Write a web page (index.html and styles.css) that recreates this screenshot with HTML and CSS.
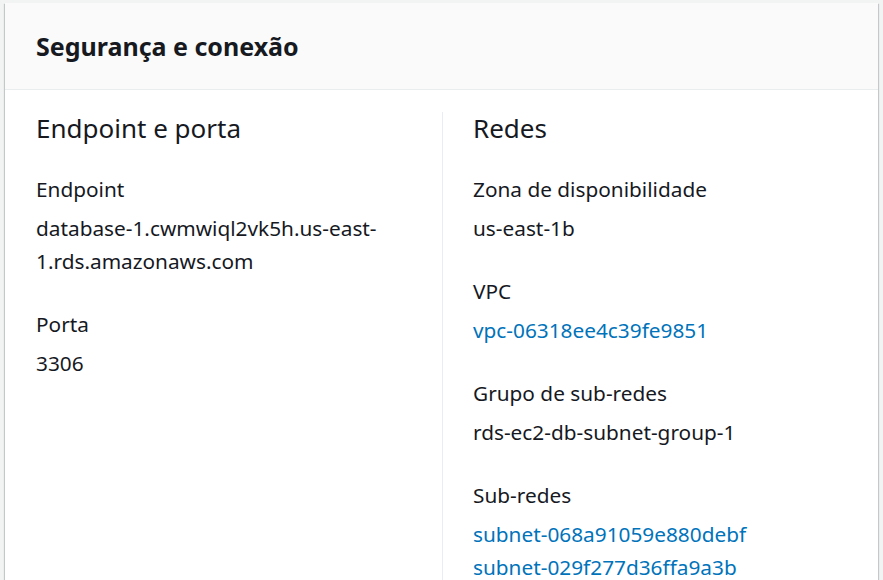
FILE: index.html
```html
<!DOCTYPE html>
<html lang="pt">
<head>
<meta charset="utf-8">
<link rel="stylesheet" href="styles.css">
</head>
<body>
<div class="panel">
  <div class="panel-header">
    <h2 class="panel-title">Segurança e conexão</h2>
  </div>
  <div class="panel-body">
    <div class="col">
      <h3 class="col-title">Endpoint e porta</h3>
      <div class="field">
        <div class="label">Endpoint</div>
        <div class="value">database-1.cwmwiql2vk5h.us-east-<br>1.rds.amazonaws.com</div>
      </div>
      <div class="field">
        <div class="label">Porta</div>
        <div class="value">3306</div>
      </div>
    </div>
    <div class="col col-right">
      <h3 class="col-title">Redes</h3>
      <div class="field">
        <div class="label">Zona de disponibilidade</div>
        <div class="value">us-east-1b</div>
      </div>
      <div class="field">
        <div class="label">VPC</div>
        <div class="value"><a class="link" href="#">vpc-06318ee4c39fe9851</a></div>
      </div>
      <div class="field">
        <div class="label">Grupo de sub-redes</div>
        <div class="value">rds-ec2-db-subnet-group-1</div>
      </div>
      <div class="field">
        <div class="label">Sub-redes</div>
        <div class="value"><a class="link" href="#">subnet-068a91059e880debf</a><br><a class="link" href="#">subnet-029f277d36ffa9a3b</a></div>
      </div>
    </div>
  </div>
</div>
</body>
</html>
```
FILE: styles.css
```css
html, body {
  margin: 0;
  padding: 0;
  background: #f2f3f3;
  font-family: "Noto Sans", "Open Sans", sans-serif;
  color: #16191f;
  overflow: hidden;
  height: 580px;
}
.panel {
  margin: 3px 5px 0 5px;
  background: #fff;
  box-shadow: 0 1px 1px 0 rgba(0, 28, 36, 0.3), 1px 1px 1px 0 rgba(0, 28, 36, 0.15), -1px 1px 1px 0 rgba(0, 28, 36, 0.15);
  height: 577px;
  overflow: hidden;
}
.panel-header {
  background: #fafafa;
  border-bottom: 1px solid #eaeded;
  height: 86px;
  display: flex;
  align-items: center;
  padding-left: 31px;
}
.panel-title {
  margin: 0;
  font-size: 25px;
  font-weight: 700;
  line-height: 30px;
}
.panel-body {
  display: flex;
  padding-top: 22px;
}
.col {
  width: 406px;
  padding-left: 31px;
  border-right: 1px solid #eaeded;
}
.col-right {
  border-right: none;
  padding-left: 30px;
  flex: 1;
}
.col-title {
  margin: 0 0 29px 0;
  font-size: 26px;
  font-weight: 400;
  line-height: 32px;
}
.field {
  margin-bottom: 30px;
}
.label {
  font-size: 20.8px;
  line-height: 33px;
  margin-bottom: 6px;
}
.value {
  font-size: 20.8px;
  line-height: 33px;
}
.link {
  color: #0073bb;
  text-decoration: none;
}
```
